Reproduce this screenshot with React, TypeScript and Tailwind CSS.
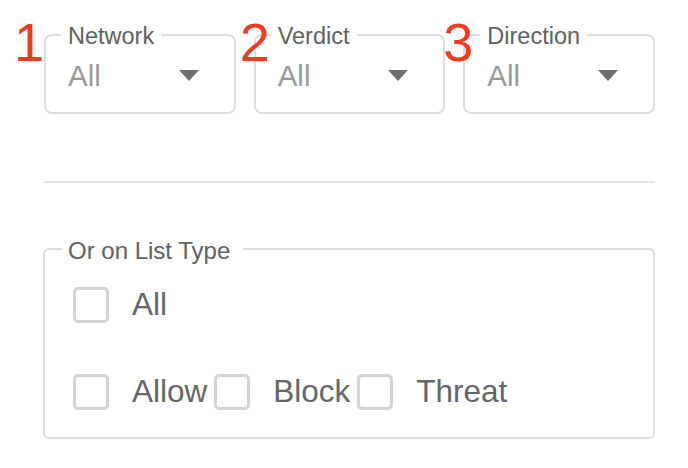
import React from 'react';

const font = { fontFamily: '"Liberation Sans", Arial, Helvetica, sans-serif' };

interface SelectProps {
  num: string;
  numLeft: string;
  label: string;
}

function Caret() {
  return (
    <svg width="20" height="11" viewBox="0 0 20 11">
      <path d="M0 0 L20 0 L10 11 Z" fill="#707070" />
    </svg>
  );
}

function FilterSelect({ num, numLeft, label }: SelectProps) {
  return (
    <div className="relative">
      <span
        className={`absolute top-[-6px] ${numLeft} text-[54px] leading-none text-[#ef3b22]`}
      >
        {num}
      </span>
      <fieldset className="border-2 border-[#dedede] rounded-[8px] min-w-0">
        <legend className="ml-[15px] px-[7px] pt-[4px] text-[23.5px] leading-none text-[#616161]">
          {label}
        </legend>
        <div className="flex items-center justify-between pl-[22px] pr-[35px] pt-[12px] pb-[22px]">
          <span className="text-[29.5px] leading-none text-[#9a9a9a]">All</span>
          <Caret />
        </div>
      </fieldset>
    </div>
  );
}

function Check({ label }: { label: string }) {
  return (
    <label className="flex items-center">
      <span className="w-[36px] h-[36px] border-[3.5px] border-[#d4d4d4] rounded-[5px] bg-white" />
      <span className="ml-[23px] text-[31.5px] leading-none text-[#666666]">{label}</span>
    </label>
  );
}

export default function App() {
  return (
    <div className="w-[688px] h-[468px] bg-white" style={font}>
      <div className="w-[611px] ml-[44px] pt-[21px]">
        <div className="grid grid-cols-3 gap-[18px]">
          <FilterSelect num="1" numLeft="left-[-30px]" label="Network" />
          <FilterSelect num="2" numLeft="left-[-14px]" label="Verdict" />
          <FilterSelect num="3" numLeft="left-[-20px]" label="Direction" />
        </div>

        <div className="mt-[67px] h-[2px] bg-[#e3e3e3]" />

        <fieldset className="mt-[52px] ml-[-1px] border-2 border-[#dedede] rounded-[6px] min-w-0">
          <legend className="ml-[17px] pl-[6px] pr-[13px] pt-[4px] text-[24px] leading-none text-[#616161]">
            Or on List Type
          </legend>
          <div className="pl-[28px] pt-[24px] pb-[27px] flex flex-col gap-[51px]">
            <Check label="All" />
            <div className="flex items-center gap-[7px]">
              <Check label="Allow" />
              <Check label="Block" />
              <Check label="Threat" />
            </div>
          </div>
        </fieldset>
      </div>
    </div>
  );
}
